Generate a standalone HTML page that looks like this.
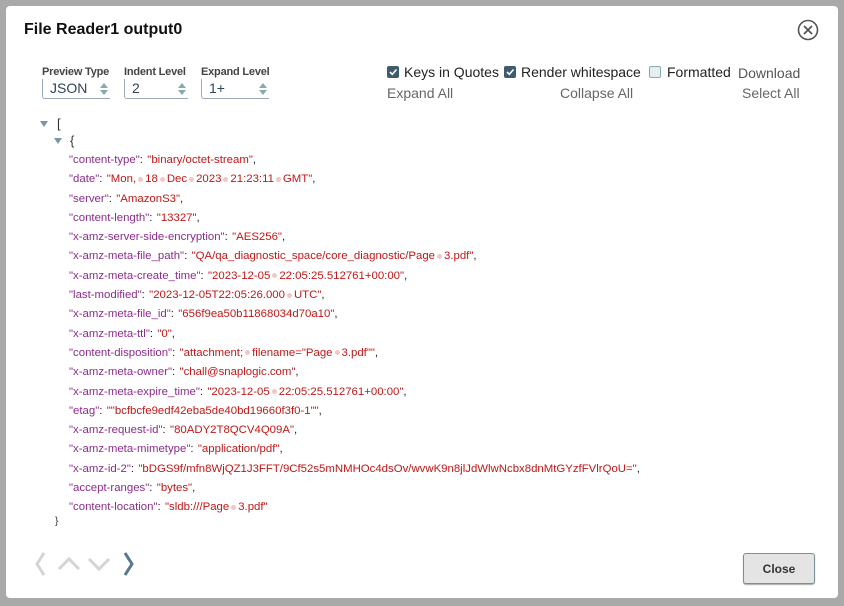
<!DOCTYPE html>
<html><head><meta charset="utf-8"><style>
body{margin:0;width:844px;height:606px;background:#a9a9a9;font-family:"Liberation Sans",sans-serif;position:relative;overflow:hidden}
.dlg{position:absolute;left:6px;top:6px;width:832px;height:592px;background:#fff;border-radius:4px}
.t{position:absolute;left:24px;top:21px;font-size:16px;font-weight:bold;color:#111}
.lbl{position:absolute;top:66px;font-size:11px;font-weight:bold;color:#444;letter-spacing:-0.2px}
.sel{position:absolute;top:79px;height:20px;border:1px solid #9ab;border-top:none;border-right:none;border-radius:0 0 0 3px;font-size:14px;color:#345;padding-left:7px;line-height:19px;box-sizing:border-box}
.sel i{position:absolute;right:2px;top:4px;width:0;height:0;border:4px solid transparent;border-bottom:5px solid #8aa;border-top:none}
.sel b{position:absolute;right:2px;top:11px;width:0;height:0;border:4px solid transparent;border-top:5px solid #8aa;border-bottom:none}
.cb{position:absolute;top:66px;width:12px;height:12px;border-radius:2px;background:#3e5c6e}
.cb.off{background:#e6eef2;border:1px solid #8aa;box-sizing:border-box}
.cb svg{position:absolute;left:1px;top:1px}
.ct{position:absolute;top:64px;font-size:14px;color:#222}
.lk{position:absolute;top:85px;font-size:14px;color:#666}
.code{position:absolute;left:69px;top:151px;font-size:11.4px;line-height:19.3px;white-space:pre;color:#222;word-spacing:-1px}
.k{color:#8b2c8b}.v{color:#c01818}
.d{display:inline-block;width:5px;height:5px;border-radius:3px;background:#f0c8c8;margin:0 2px;vertical-align:middle}
.tri{position:absolute;width:0;height:0;border:4px solid transparent;border-top:6px solid #7a96a4;border-bottom:none}
.btn{position:absolute;left:743px;top:553px;width:72px;height:31px;border:1px solid #7d8f99;border-radius:3px;background:#e4e4e4;font-size:12px;font-weight:bold;color:#333;text-align:center;line-height:30px;box-sizing:border-box;box-shadow:0 1px 1px #aaa}
</style></head><body>
<div class="dlg"></div>
<div class="t">File Reader1 output0</div>
<svg style="position:absolute;left:797px;top:19px" width="22" height="22" viewBox="0 0 22 22"><circle cx="11" cy="11" r="9.5" fill="none" stroke="#555" stroke-width="1.6"/><path d="M7 7L15 15M15 7L7 15" stroke="#555" stroke-width="1.8"/></svg>
<div class="lbl" style="left:42px">Preview Type</div>
<div class="lbl" style="left:124px">Indent Level</div>
<div class="lbl" style="left:201px">Expand Level</div>
<div class="sel" style="left:42px;width:68px">JSON<i></i><b></b></div>
<div class="sel" style="left:124px;width:64px">2<i></i><b></b></div>
<div class="sel" style="left:201px;width:68px">1+<i></i><b></b></div>
<div class="cb" style="left:387px"><svg width="10" height="10"><path d="M2 5L4.3 7.3L8.5 2.5" stroke="#fff" stroke-width="1.6" fill="none"/></svg></div>
<div class="ct" style="left:404px">Keys in Quotes</div>
<div class="cb" style="left:504px"><svg width="10" height="10"><path d="M2 5L4.3 7.3L8.5 2.5" stroke="#fff" stroke-width="1.6" fill="none"/></svg></div>
<div class="ct" style="left:521px">Render whitespace</div>
<div class="cb off" style="left:649px"></div>
<div class="ct" style="left:667px">Formatted</div>
<div class="ct" style="left:738px;color:#555;top:65px">Download</div>
<div class="lk" style="left:387px">Expand All</div>
<div class="lk" style="left:560px">Collapse All</div>
<div class="lk" style="left:742px">Select All</div>
<div class="tri" style="left:40px;top:121px"></div>
<div style="position:absolute;left:57px;top:116px;font-size:13px;color:#333">[</div>
<div class="tri" style="left:54px;top:138px"></div>
<div style="position:absolute;left:70px;top:133px;font-size:13px;color:#333">{</div>
<div class="code"><span class="k">"content-type"</span>:  <span class="v">"binary/octet-stream"</span>,
<span class="k">"date"</span>:  <span class="v">"Mon,<span class="d"></span>18<span class="d"></span>Dec<span class="d"></span>2023<span class="d"></span>21:23:11<span class="d"></span>GMT"</span>,
<span class="k">"server"</span>:  <span class="v">"AmazonS3"</span>,
<span class="k">"content-length"</span>:  <span class="v">"13327"</span>,
<span class="k">"x-amz-server-side-encryption"</span>:  <span class="v">"AES256"</span>,
<span class="k">"x-amz-meta-file_path"</span>:  <span class="v">"QA/qa_diagnostic_space/core_diagnostic/Page<span class="d"></span>3.pdf"</span>,
<span class="k">"x-amz-meta-create_time"</span>:  <span class="v">"2023-12-05<span class="d"></span>22:05:25.512761+00:00"</span>,
<span class="k">"last-modified"</span>:  <span class="v">"2023-12-05T22:05:26.000<span class="d"></span>UTC"</span>,
<span class="k">"x-amz-meta-file_id"</span>:  <span class="v">"656f9ea50b11868034d70a10"</span>,
<span class="k">"x-amz-meta-ttl"</span>:  <span class="v">"0"</span>,
<span class="k">"content-disposition"</span>:  <span class="v">"attachment;<span class="d"></span>filename="Page<span class="d"></span>3.pdf""</span>,
<span class="k">"x-amz-meta-owner"</span>:  <span class="v">"chall@snaplogic.com"</span>,
<span class="k">"x-amz-meta-expire_time"</span>:  <span class="v">"2023-12-05<span class="d"></span>22:05:25.512761+00:00"</span>,
<span class="k">"etag"</span>:  <span class="v">""bcfbcfe9edf42eba5de40bd19660f3f0-1""</span>,
<span class="k">"x-amz-request-id"</span>:  <span class="v">"80ADY2T8QCV4Q09A"</span>,
<span class="k">"x-amz-meta-mimetype"</span>:  <span class="v">"application/pdf"</span>,
<span class="k">"x-amz-id-2"</span>:  <span class="v">"bDGS9f/mfn8WjQZ1J3FFT/9Cf52s5mNMHOc4dsOv/wvwK9n8jlJdWlwNcbx8dnMtGYzfFVlrQoU="</span>,
<span class="k">"accept-ranges"</span>:  <span class="v">"bytes"</span>,
<span class="k">"content-location"</span>:  <span class="v">"sldb:///Page<span class="d"></span>3.pdf"</span></div>
<div style="position:absolute;left:55px;top:516px;font-size:10px;color:#333">}</div>
<svg style="position:absolute;left:28px;top:550px" width="115" height="28"><path d="M16 3L9 14L16 25" stroke="#d4d4d4" stroke-width="3" fill="none"/><path d="M31 19L41 9L51 19" stroke="#d4d4d4" stroke-width="3" fill="none"/><path d="M61 9L71 19L81 9" stroke="#d4d4d4" stroke-width="3" fill="none"/><path d="M97 3L104 14L97 25" stroke="#557a8c" stroke-width="3" fill="none"/></svg>
<div class="btn">Close</div>
</body></html>
